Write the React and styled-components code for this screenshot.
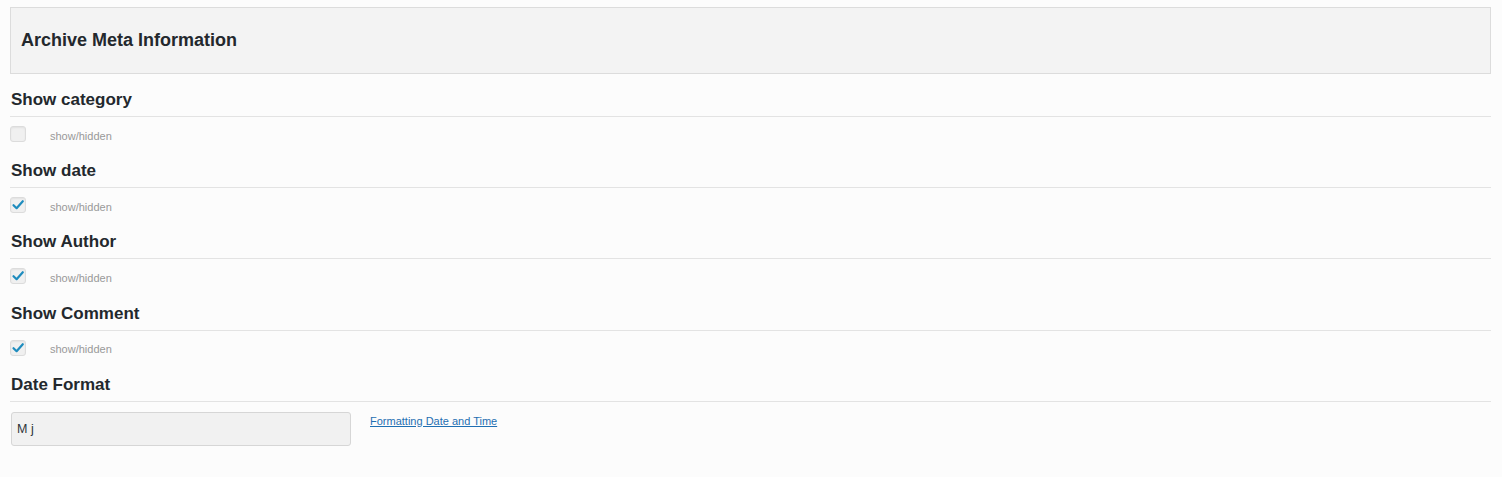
import React from "react";
import styled, { createGlobalStyle } from "styled-components";

const Global = createGlobalStyle`
  html, body { margin: 0; padding: 0; background: #fcfcfc; }
  body { font-family: "Liberation Sans", Arial, sans-serif; color: #23282d; }
`;

const Page = styled.div`
  padding: 7px 11px 20px 10px;
  min-height: 450px;
`;

const Header = styled.div`
  height: 65px;
  border: 1px solid #dcdcdc;
  background: #f3f3f3;
  display: flex;
  align-items: center;
  padding-left: 10px;
`;

const Title = styled.h2`
  margin: 0;
  font-size: 18px;
  font-weight: 700;
  color: #23282d;
  padding-bottom: 1px;
`;

const Section = styled.section`
  margin-top: ${(p) => p.$first ? "15px" : "18.2px"};
`;

const Heading = styled.h3`
  margin: 0;
  font-size: 17px;
  line-height: 20px;
  font-weight: 700;
  color: #23282d;
  padding: 1px 0 6px 1px;
  border-bottom: 1px solid #e3e3e3;
`;

const Row = styled.div`
  display: flex;
  align-items: ${(p) => p.$top ? "flex-start" : "center"};
  margin-top: ${(p) => p.$top ? "10px" : "9px"};
  gap: ${(p) => p.$top ? "19px" : "24px"};
`;

const Box = styled.span`
  width: 14px;
  height: 14px;
  border: 1px solid #dcdcdc;
  border-radius: 3px;
  background: #f0f0f0;
  box-shadow: inset 0 1px 2px rgba(0,0,0,0.06);
  display: flex;
  align-items: center;
  justify-content: center;
  flex: none;
`;

const Note = styled.span`
  font-size: 11px;
  color: #999;
  padding-top: 3px;
`;

const Input = styled.div`
  width: 331px;
  height: 32px;
  margin-left: 1px;
  border: 1px solid #d6d6d6;
  border-radius: 3px;
  background: #f1f1f1;
  display: flex;
  align-items: center;
  padding-left: 5px;
  padding-right: 2px;
  font-size: 12.5px;
  color: #2c3338;
  box-sizing: content-box;
`;

const Link = styled.a`
  font-size: 11px;
  color: #1f6fb2;
  text-decoration: underline;
  margin-top: 3px;
`;

const Check = () => (
  <svg width="14" height="14" viewBox="0 0 14 14">
    <path d="M2.5 7.2 L5.6 10.2 L11.8 3.2" fill="none" stroke="#1e8cbe" strokeWidth="2.2" strokeLinecap="round" strokeLinejoin="round" />
  </svg>
);

const items = [
  { label: "Show category", checked: false },
  { label: "Show date", checked: true },
  { label: "Show Author", checked: true },
  { label: "Show Comment", checked: true },
];

export default function App() {
  return (
    <>
      <Global />
      <Page>
        <Header><Title>Archive Meta Information</Title></Header>
        {items.map((it, i) => (
          <Section key={it.label} $first={i === 0}>
            <Heading>{it.label}</Heading>
            <Row>
              <Box>{it.checked && <Check />}</Box>
              <Note>show/hidden</Note>
            </Row>
          </Section>
        ))}
        <Section>
          <Heading>Date Format</Heading>
          <Row $top>
            <Input>M j</Input>
            <Link href="#">Formatting Date and Time</Link>
          </Row>
        </Section>
      </Page>
    </>
  );
}
